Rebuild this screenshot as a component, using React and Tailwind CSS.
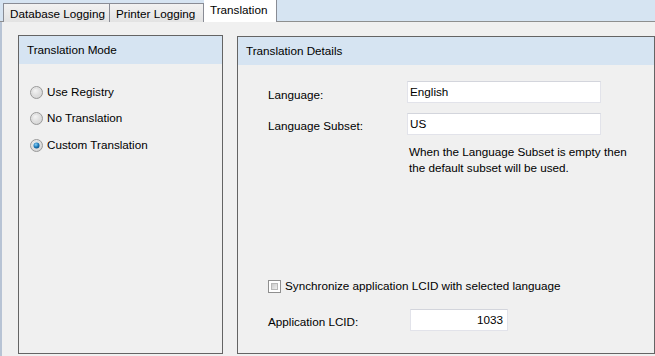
import React from "react";

function Radio({ checked }) {
  return (
    <svg width="13" height="13" viewBox="0 0 13 13" className="shrink-0">
      <defs>
        <radialGradient id={checked ? "rg1" : "rg0"} cx="0.4" cy="0.35" r="0.7">
          <stop offset="0" stopColor="#f4f4f4" />
          <stop offset="1" stopColor="#cfcfcf" />
        </radialGradient>
        <radialGradient id="dot" cx="0.4" cy="0.35" r="0.7">
          <stop offset="0" stopColor="#8ad0f5" />
          <stop offset="0.6" stopColor="#1a78b8" />
          <stop offset="1" stopColor="#0c4e82" />
        </radialGradient>
      </defs>
      <circle cx="6.5" cy="6.5" r="6" fill={`url(#${checked ? "rg1" : "rg0"})`} stroke="#9a9a9a" strokeWidth="1" />
      <circle cx="6.5" cy="6.5" r="4.3" fill="none" stroke="#dedede" strokeWidth="0.8" />
      {checked && <circle cx="6.5" cy="6.5" r="3" fill="url(#dot)" />}
    </svg>
  );
}

function Checkbox() {
  return (
    <div className="w-[13px] h-[13px] border border-[#8f8f8f] bg-white p-[2px] shrink-0">
      <div className="w-full h-full bg-gradient-to-br from-[#cbcbcb] to-[#f0f0f0] border border-[#b8b8b8]" />
    </div>
  );
}

function Input({ value, className = "", right }) {
  return (
    <div
      className={`h-[22px] bg-white border border-[#e2e3ea] border-t-[#d3d5dc] flex items-center ${right ? "justify-end pr-[4px]" : "pl-[2px]"} ${className}`}
    >
      {value}
    </div>
  );
}

export default function App() {
  return (
    <div
      className="w-[655px] h-[356px] flex flex-col text-[11.7px] text-black overflow-hidden bg-[#f0f0f0] whitespace-nowrap"
      style={{ fontFamily: '"Liberation Sans", Arial, sans-serif' }}
    >
      {/* tab strip */}
      <div className="h-[22px] shrink-0 bg-[#d6e4f2] border-b border-[#8e8f8f] flex items-end pl-[3px]">
        <div className="h-[19px] -mb-px px-[6px] pt-[1px] shrink-0 flex items-center border border-b-0 border-[#898c95] bg-gradient-to-b from-[#f2f2f2] to-[#e3e3e3] w-[107px]">
          Database Logging
        </div>
        <div className="h-[19px] -mb-px px-[6px] pt-[1px] shrink-0 flex items-center border border-b-0 border-l-0 border-[#898c95] bg-gradient-to-b from-[#f2f2f2] to-[#e3e3e3] w-[94px]">
          Printer Logging
        </div>
        <div className="h-[23px] -mb-px px-[6px] pb-[3px] shrink-0 flex items-center border border-b-0 border-l-0 border-[#898c95] bg-white w-[73px]">
          Translation
        </div>
      </div>

      {/* content */}
      <div className="flex-1 flex border-l-2 border-l-[#b7c3d4] pl-[16px] pt-[13px] pb-[2px] gap-[14px] min-h-0">
        {/* left group */}
        <div className="w-[205px] shrink-0 flex flex-col border border-[#646464]">
          <div className="h-[28px] bg-[#d6e4f2] flex items-center pl-[8px] shrink-0">Translation Mode</div>
          <div className="flex flex-col pl-[11px] pt-[20px] gap-[10px]">
            <div className="flex items-center gap-[4px] h-[16px]">
              <Radio />
              <span>Use Registry</span>
            </div>
            <div className="flex items-center gap-[4px] h-[16px]">
              <Radio />
              <span>No Translation</span>
            </div>
            <div className="flex items-center gap-[4px] h-[16px] mt-[1px]">
              <Radio checked />
              <span>Custom Translation</span>
            </div>
          </div>
        </div>

        {/* right group */}
        <div className="w-[418px] shrink-0 flex flex-col border border-[#646464] mt-[1px]">
          <div className="h-[28px] bg-[#d6e4f2] flex items-center pl-[8px] shrink-0">Translation Details</div>
          <div className="flex-1 flex flex-col pl-[30px] pt-[16px] pb-[22px]">
            <div className="flex items-center h-[22px]">
              <span className="w-[139px] pt-[6px]">Language:</span>
              <Input value="English" className="w-[194px]" />
            </div>
            <div className="flex items-center h-[22px] mt-[10px]">
              <span className="w-[139px] pt-[4px]">Language Subset:</span>
              <Input value="US" className="w-[194px]" />
            </div>
            <div className="pl-[141px] mt-[9px] leading-[16px]">
              When the Language Subset is empty then
              <br />
              the default subset will be used.
            </div>
            <div className="flex-1" />
            <div className="flex items-center gap-[4px] h-[16px]">
              <Checkbox />
              <span>Synchronize application LCID with selected language</span>
            </div>
            <div className="flex items-center h-[22px] mt-[15px]">
              <span className="w-[142px] pt-[4px]">Application LCID:</span>
              <Input value="1033" right className="w-[98px]" />
            </div>
          </div>
        </div>
      </div>
    </div>
  );
}
